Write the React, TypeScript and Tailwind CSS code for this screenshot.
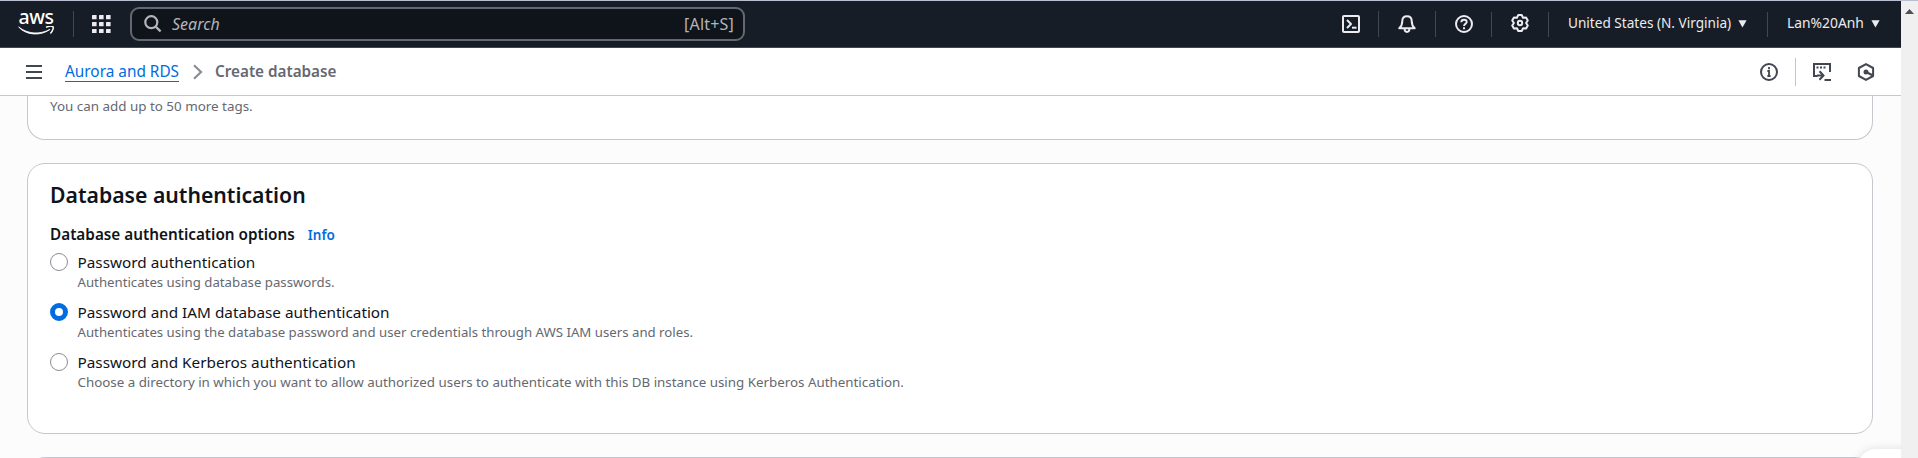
import React from "react";

function AwsLogo() {
  return (
    <div className="relative ml-[18px] h-[24px] w-[37px] shrink-0">
      <span className="absolute left-[0.5px] top-[-6px] text-[19.5px] font-medium leading-[22px] tracking-[-0.4px] text-white">
        aws
      </span>
      <svg className="absolute left-0 top-[14px]" width="37" height="10" viewBox="0 0 37 10" fill="none" stroke="#fff">
        <path d="M.6.9C10 8.400 22 8.600 32 3.400 23 10.200 8 9.600.6.9Z" fill="#fff" strokeWidth=".8" strokeLinejoin="round" />
        <path d="M28.600 1C31 .2 34.300 0 35 .8c.7 1-.4 4.200-2.200 6.200" strokeWidth="1.500" strokeLinecap="round" />
      </svg>
    </div>
  );
}

function AppsIcon() {
  const cells = [0, 7, 14];
  return (
    <svg width="19" height="18" viewBox="0 0 19 18" fill="#ebebf0" className="ml-[18px] shrink-0">
      {cells.map((y) => cells.map((x) => <rect key={`${x}-${y}`} x={x} y={y} width="4.600" height="4.300" rx=".5" />))}
    </svg>
  );
}

function Divider({ className = "" }: { className?: string }) {
  return <div className={`w-px shrink-0 bg-[#424650] ${className}`} />;
}

function TerminalIcon() {
  return (
    <svg width="18" height="18" viewBox="0 0 18 18" fill="none" stroke="#ebebf0" strokeWidth="2" strokeLinejoin="round">
      <rect x="1" y="1" width="16" height="16" rx="1" />
      <path d="M5 5l4 4-4 4" />
      <path d="M10 12.700h4.500" />
    </svg>
  );
}

function BellIcon() {
  return (
    <svg width="18" height="18" viewBox="0 0 18 18" fill="none" stroke="#ebebf0" strokeWidth="2" strokeLinejoin="round">
      <path d="M9 1.200c-2.900 0-4.700 2-4.700 4.700 0 3.300-.8 5.300-3 7.400h15.400c-2.200-2.100-3-4.100-3-7.400 0-2.700-1.800-4.700-4.700-4.700Z" />
      <path d="M6.600 14c.1 1.900 1 2.900 2.400 2.900s2.300-1 2.400-2.900" />
    </svg>
  );
}

function HelpIcon() {
  return (
    <svg width="18" height="18" viewBox="0 0 18 18" fill="none" stroke="#ebebf0" strokeWidth="2">
      <circle cx="9" cy="9" r="8" />
      <path d="M6.300 7.200C6.300 5.600 7.400 4.700 9 4.700s2.700.9 2.700 2.300c0 1.900-2.700 1.900-2.700 4" strokeWidth="1.900" />
      <path d="M9 12.200v2" />
    </svg>
  );
}

// Six teeth, each given by its two outer corners and the valley that follows it.
const gearPoints = [0, 60, 120, 180, 240, 300]
  .flatMap((deg) => {
    const a = (deg * Math.PI) / 180;
    return [
      [-1.7, -8],
      [1.7, -8],
      [3, -5.3],
    ].map(([x, y]) => `${(9 + x * Math.cos(a) - y * Math.sin(a)).toFixed(2)},${(9 + x * Math.sin(a) + y * Math.cos(a)).toFixed(2)}`);
  })
  .join(" ");

function GearIcon() {
  return (
    <svg width="18" height="18" viewBox="0 0 18 18" fill="none" stroke="#ebebf0" strokeWidth="2" strokeLinejoin="round">
      <polygon points={gearPoints} />
      <circle cx="9" cy="9" r="2.200" />
    </svg>
  );
}

function Caret() {
  return (
    <svg width="9" height="8" viewBox="0 0 9 8" fill="#ebebf0" className="shrink-0">
      <path d="M.4.300h8.200L4.500 7.400Z" />
    </svg>
  );
}

function TopNav() {
  return (
    <header className="flex h-[47px] shrink-0 items-center border-b border-[#424650] bg-[#161d26]">
      <AwsLogo />
      <Divider className="ml-[18px] h-[26px]" />
      <AppsIcon />
      <div className="ml-[19px] flex h-[34px] w-[615px] shrink-0 items-center rounded-[9px] border-2 border-[#656871] bg-[#0f141a] pl-[12px] pr-[9px] text-[16px] leading-[20px] text-[#b4b4bb]">
        <svg width="18" height="18" viewBox="0 0 18 18" fill="none" stroke="#b4b4bb" strokeWidth="2.200">
          <circle cx="7.300" cy="7.200" r="6" />
          <path d="M11.400 11.400l5.200 5" />
        </svg>
        <span className="ml-[10px] italic">Search</span>
        <span className="ml-auto tracking-[0.2px]">[Alt+S]</span>
      </div>
      <div className="ml-auto flex h-full items-center text-[#ebebf0]">
        <TerminalIcon />
        <Divider className="ml-[18px] h-[26px]" />
        <div className="ml-[19px]"><BellIcon /></div>
        <Divider className="ml-[19px] h-[26px]" />
        <div className="ml-[19px]"><HelpIcon /></div>
        <Divider className="ml-[18px] h-[25px]" />
        <div className="-mt-[2px] ml-[19px]"><GearIcon /></div>
        <Divider className="ml-[19px] h-[25px]" />
        <span className="-mt-[2px] ml-[19px] w-[170px] whitespace-nowrap text-[13.600px] leading-[20px]">United States (N. Virginia)</span>
        <Caret />
        <Divider className="ml-[20px] h-[25px]" />
        <span className="-mt-[2px] ml-[19px] w-[84px] whitespace-nowrap text-[13.850px] leading-[20px]">Lan%20Anh</span>
        <Caret />
        <div className="w-[21px]" />
      </div>
    </header>
  );
}

function BreadcrumbBar() {
  return (
    <nav className="flex h-[48px] shrink-0 items-center border-b border-[#c6c6cd] bg-white">
      <svg width="16" height="14" viewBox="0 0 16 14" fill="#424650" className="ml-[26px] shrink-0">
        <rect width="16" height="2" y="0" />
        <rect width="16" height="2" y="6" />
        <rect width="16" height="2" y="12" />
      </svg>
      <a className="-mt-px ml-[23px] h-[21px] border-b border-[#006ce0] text-[15.360px] leading-[22px] text-[#006ce0]">
        Aurora and RDS
      </a>
      <svg width="10" height="16" viewBox="0 0 10 16" fill="none" stroke="#8c8c94" strokeWidth="2.200" className="ml-[14px] shrink-0">
        <path d="M1 1.200L8 8l-7 6.800" />
      </svg>
      <span className="-mt-[2px] ml-[12px] text-[15.250px] font-semibold leading-[22px] text-[#656871]">Create database</span>
      <div className="ml-auto flex items-center pr-[26px]">
        <svg width="18" height="18" viewBox="0 0 18 18" fill="none" stroke="#424650" strokeWidth="2">
          <circle cx="9" cy="9" r="8" />
          <path d="M9 4v2.200M7.400 8H9v5M7.400 13h3.200" strokeWidth="1.800" />
        </svg>
        <div className="ml-[17px] h-[28px] w-px bg-[#c6c6cd]" />
        <svg width="18" height="18" viewBox="0 0 18 18" fill="none" stroke="#424650" strokeWidth="2" className="ml-[17px]">
          <path d="M4.500 13H1V1h16v8" />
          <path d="M3.500 4.500h2M7 4.500h2M10.500 4.500h2" />
          <path d="M4 12.500h6.500" />
          <path d="M6.500 8.200l4 4.300-4 4.300" />
          <path d="M11.500 17H18" />
        </svg>
        <svg width="18" height="18" viewBox="0 0 18 18" fill="none" stroke="#424650" strokeWidth="2" strokeLinejoin="round" className="ml-[26px]">
          <path d="M9 1.100l7.100 3.900v8L9 16.900 1.900 13V5Z" />
          <circle cx="9" cy="9" r="2.500" fill="#424650" stroke="none" />
          <path d="M9 9l6.500 3.300" strokeWidth="2.200" />
        </svg>
      </div>
    </nav>
  );
}

type Option = { label: string; description: string; size: string; checked?: boolean };

const options: Option[] = [
  {
    label: "Password authentication",
    description: "Authenticates using database passwords.",
    size: "text-[13.230px]",
  },
  {
    label: "Password and IAM database authentication",
    description: "Authenticates using the database password and user credentials through AWS IAM users and roles.",
    size: "text-[13.230px]",
    checked: true,
  },
  {
    label: "Password and Kerberos authentication",
    description:
      "Choose a directory in which you want to allow authorized users to authenticate with this DB instance using Kerberos Authentication.",
    size: "text-[13.350px]",
  },
];

function RadioOption({ label, description, size, checked }: Option) {
  return (
    <label className="flex items-start">
      <span
        className={
          checked
            ? "mt-[2px] h-[18px] w-[18px] shrink-0 rounded-full border-[5.500px] border-[#006ce0] bg-white"
            : "mt-[2px] h-[18px] w-[18px] shrink-0 rounded-full border border-[#8c8c94] bg-white"
        }
      />
      <span className="ml-[9.500px] flex flex-col whitespace-nowrap">
        <span className="text-[15.300px] leading-[22px] text-[#0f141a]">{label}</span>
        <span className={`leading-[18px] text-[#656871] ${size}`}>{description}</span>
      </span>
    </label>
  );
}

export default function App() {
  return (
    <div className="flex h-[458px] w-[1918px] flex-col overflow-hidden bg-[#fcfcfd] font-['Noto_Sans',sans-serif]">
      <div className="h-px shrink-0 bg-[#b9bfd0]" />
      <div className="flex min-h-0 flex-1">
        <div className="relative flex w-[1901px] flex-col overflow-hidden">
          <TopNav />
          <BreadcrumbBar />
          <main className="flex flex-col pl-[27px] pr-[28px]">
            <section className="h-[44px] shrink-0 rounded-b-[18px] border border-t-0 border-[#c6c6cd] bg-white pl-[22px]">
              <p className="pt-px text-[13.400px] leading-[18px] text-[#656871]">You can add up to 50 more tags.</p>
            </section>
            <section className="mt-[23px] h-[271px] shrink-0 rounded-[18px] border border-[#c6c6cd] bg-white pl-[22px] pt-[17px]">
              <h2 className="text-[21.200px] font-semibold leading-[28px] text-[#0f141a]">Database authentication</h2>
              <div className="mt-[14px] flex items-baseline text-[#0f141a]">
                <span className="text-[15.300px] font-semibold leading-[22px]">Database authentication options</span>
                <a className="ml-[13px] text-[13.500px] font-semibold leading-[20px] text-[#006ce0]">Info</a>
              </div>
              <div className="mt-[6px] flex flex-col gap-[10px]">
                {options.map((option) => (
                  <RadioOption key={option.label} {...option} />
                ))}
              </div>
            </section>
            <section className="mt-[23px] h-[60px] shrink-0 rounded-[18px] border border-[#c6c6cd] bg-white" />
          </main>
          <div className="absolute left-[1858px] top-[448px] h-[40px] w-[60px] rounded-tl-[18px] bg-white shadow-[0_0_10px_rgba(0,7,22,0.12)]" />
        </div>
        <div className="flex w-[17px] justify-center bg-[#f0f0f0] pt-[8px]">
          <svg width="9" height="5" viewBox="0 0 9 5" fill="#505050">
            <path d="M4.500 0L9 5H0Z" />
          </svg>
        </div>
      </div>
    </div>
  );
}
